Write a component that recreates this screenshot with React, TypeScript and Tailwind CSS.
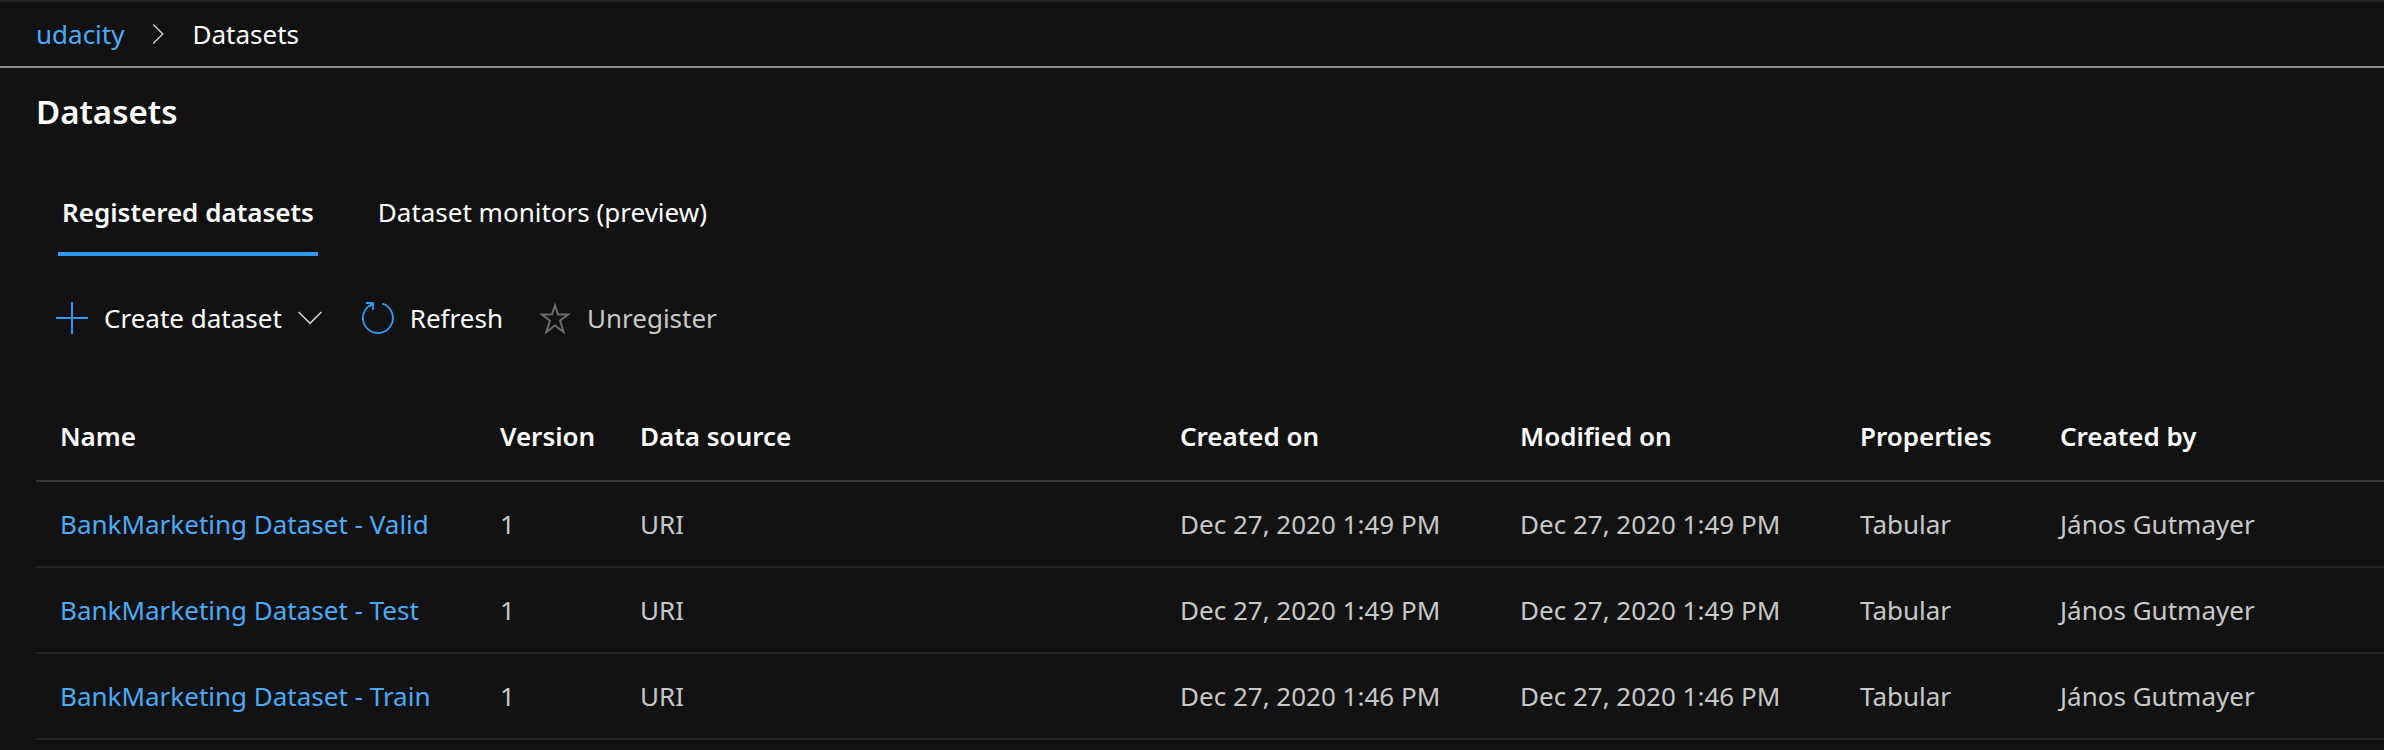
const columns = [
  { label: 'Name', width: 'w-[440px]' },
  { label: 'Version', width: 'w-[140px]' },
  { label: 'Data source', width: 'w-[540px]' },
  { label: 'Created on', width: 'w-[340px]' },
  { label: 'Modified on', width: 'w-[340px]' },
  { label: 'Properties', width: 'w-[200px]' },
  { label: 'Created by', width: 'w-auto' },
];

const datasets = [
  { name: 'BankMarketing Dataset - Valid', time: 'Dec 27, 2020 1:49 PM' },
  { name: 'BankMarketing Dataset - Test', time: 'Dec 27, 2020 1:49 PM' },
  { name: 'BankMarketing Dataset - Train', time: 'Dec 27, 2020 1:46 PM' },
];

function Breadcrumb() {
  return (
    <nav
      aria-label="Breadcrumb"
      className="flex h-[68px] items-center gap-7 border-t-2 border-b-2 border-t-[#252525] border-b-[#8f8f8f] px-9"
    >
      <a href="#workspace" className="text-[#4caaf8]">udacity</a>
      <svg className="h-5 w-3" viewBox="0 0 12 20" fill="none" stroke="#d0d0d0" strokeWidth="1.4" aria-hidden="true">
        <path d="M1.2 .5 10.8 10 1.2 19.5" />
      </svg>
      <span>Datasets</span>
    </nav>
  );
}

function Tabs() {
  return (
    <div role="tablist" className="mt-8 flex gap-14 pl-[22px]">
      <button role="tab" aria-selected="true" className="h-[88px] border-b-4 border-[#2f9bf4] px-1 pt-1 font-semibold">
        Registered datasets
      </button>
      <button role="tab" aria-selected="false" className="h-[88px] border-b-4 border-transparent px-1 pt-1">
        Dataset monitors (preview)
      </button>
    </div>
  );
}

function Commands() {
  return (
    <div className="mt-6 flex h-[76px] items-center gap-9 pl-5">
      <button className="flex items-center gap-4 pr-1">
        <svg className="size-8" viewBox="0 0 32 32" fill="#2f9bf4" aria-hidden="true">
          <path d="M15 0h2v15h15v2H17v15h-2V17H0v-2h15z" />
        </svg>
        Create dataset
        <svg className="h-3.5 w-6" viewBox="0 0 24 14" fill="none" stroke="#d0d0d0" strokeWidth="1.6" aria-hidden="true">
          <path d="M.6 1 12 12.4 23.4 1" />
        </svg>
      </button>
      <button className="flex items-center gap-4">
        <svg className="size-8" viewBox="0 0 32 32" fill="none" stroke="#2f9bf4" strokeWidth="1.8" aria-hidden="true">
          <path d="M20.4 1.7A15 15 0 1 1 10.6 2" />
          <path d="M4 1h7v7M11 1 7.5 4.5" />
        </svg>
        Refresh
      </button>
      <button disabled className="flex items-center gap-4 text-[#c8c8c8]">
        <svg className="size-8" viewBox="0 0 32 32" fill="none" stroke="#6b6b6b" strokeWidth="2" aria-hidden="true">
          <path d="M16 3.4 19.1 12.6H29L21.1 18.6 24.6 30 16 23.4 7.4 30 10.9 18.6 3 12.6H12.9Z" />
        </svg>
        Unregister
      </button>
    </div>
  );
}

function DatasetTable() {
  return (
    <table className="mt-[38px] w-full table-fixed border-separate border-spacing-0 text-left whitespace-nowrap">
      <thead>
        <tr>
          {columns.map((column) => (
            <th key={column.label} className={`${column.width} h-[88px] border-b-2 border-[#373737] pb-0.5 pl-6 font-semibold`}>
              {column.label}
            </th>
          ))}
        </tr>
      </thead>
      <tbody className="text-[#c8c8c8] [&_td]:h-[86px] [&_td]:border-b-2 [&_td]:border-[#252525] [&_td]:pl-6">
        {datasets.map((dataset) => (
          <tr key={dataset.name}>
            <td><a href="#dataset" className="text-[#4caaf8]">{dataset.name}</a></td>
            <td>1</td>
            <td>URI</td>
            <td>{dataset.time}</td>
            <td>{dataset.time}</td>
            <td>Tabular</td>
            <td>János Gutmayer</td>
          </tr>
        ))}
      </tbody>
    </table>
  );
}

export default function App() {
  return (
    <div className="min-h-screen bg-[#121212] font-['Noto_Sans',sans-serif] text-[26px] leading-9 text-white">
      <Breadcrumb />
      <main className="pt-5 pl-9">
        <h1 className="text-[33px] leading-12 font-semibold">Datasets</h1>
        <Tabs />
        <Commands />
        <DatasetTable />
      </main>
    </div>
  );
}
